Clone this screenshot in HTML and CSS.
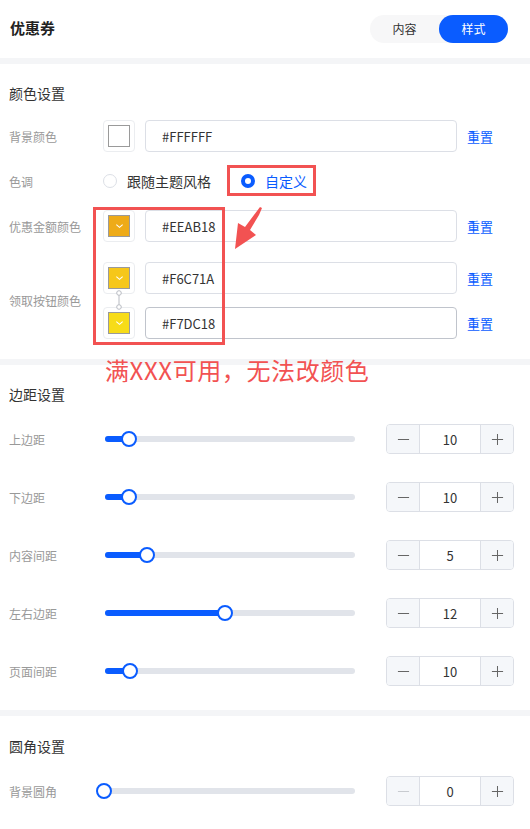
FILE: index.html
```html
<!DOCTYPE html>
<html lang="zh-CN">
<head>
<meta charset="utf-8">
<title>优惠券</title>
<link rel="stylesheet" href="styles.css">
</head>
<body>
<div class="page">
  <header class="top">
    <h1 class="title">优惠券</h1>
    <div class="tabs">
      <span class="tab">内容</span>
      <span class="tab active">样式</span>
    </div>
  </header>

  <section class="sec">
    <h2 class="sec-title">颜色设置</h2>
    <div class="row">
      <span class="label">背景颜色</span>
      <div class="swatch"><i class="chip chip-white"></i></div>
      <div class="input">#FFFFFF</div>
      <a class="reset">重置</a>
    </div>
    <div class="row">
      <span class="label">色调</span>
      <div class="radio"><span class="ring"></span>跟随主题风格</div>
      <div class="radio checked"><span class="ring"></span>自定义</div>
    </div>
    <div class="row">
      <span class="label">优惠金额颜色</span>
      <div class="swatch"><i class="chip chip-amount"><svg viewBox="0 0 10 6" class="chev"><polyline points="1.5,1.5 5,4.5 8.5,1.5"/></svg></i></div>
      <div class="input">#EEAB18</div>
      <a class="reset">重置</a>
    </div>
    <div class="row group">
      <span class="label">领取按钮颜色</span>
      <div class="pair">
        <div class="subrow">
          <div class="swatch"><i class="chip chip-btn1"><svg viewBox="0 0 10 6" class="chev"><polyline points="1.5,1.5 5,4.5 8.5,1.5"/></svg></i></div>
          <div class="input">#F6C71A</div>
          <a class="reset">重置</a>
        </div>
        <div class="subrow">
          <div class="swatch"><i class="chip chip-btn2"><svg viewBox="0 0 10 6" class="chev"><polyline points="1.5,1.5 5,4.5 8.5,1.5"/></svg></i></div>
          <div class="input input-hover">#F7DC18</div>
          <a class="reset">重置</a>
        </div>
        <svg class="link" viewBox="0 0 8 20"><circle cx="4" cy="3" r="2.3"/><line x1="4" y1="5.3" x2="4" y2="14.7"/><circle cx="4" cy="17" r="2.3"/></svg>
      </div>
    </div>
  </section>

  <section class="sec sec-space">
    <h2 class="sec-title">边距设置</h2>
    <div class="srow">
      <span class="label slabel">上边距</span>
      <div class="track"><div class="fill" style="width:24px"></div><span class="thumb" style="left:24px"></span></div>
      <div class="stepper"><span class="btn"><svg viewBox="0 0 14 14"><line x1="1" y1="7" x2="13" y2="7"/></svg></span><span class="val">10</span><span class="btn"><svg viewBox="0 0 14 14"><line x1="1" y1="7" x2="13" y2="7"/><line x1="7" y1="1" x2="7" y2="13"/></svg></span></div>
    </div>
    <div class="srow">
      <span class="label slabel">下边距</span>
      <div class="track"><div class="fill" style="width:24px"></div><span class="thumb" style="left:24px"></span></div>
      <div class="stepper"><span class="btn"><svg viewBox="0 0 14 14"><line x1="1" y1="7" x2="13" y2="7"/></svg></span><span class="val">10</span><span class="btn"><svg viewBox="0 0 14 14"><line x1="1" y1="7" x2="13" y2="7"/><line x1="7" y1="1" x2="7" y2="13"/></svg></span></div>
    </div>
    <div class="srow">
      <span class="label slabel">内容间距</span>
      <div class="track"><div class="fill" style="width:42px"></div><span class="thumb" style="left:42px"></span></div>
      <div class="stepper"><span class="btn"><svg viewBox="0 0 14 14"><line x1="1" y1="7" x2="13" y2="7"/></svg></span><span class="val">5</span><span class="btn"><svg viewBox="0 0 14 14"><line x1="1" y1="7" x2="13" y2="7"/><line x1="7" y1="1" x2="7" y2="13"/></svg></span></div>
    </div>
    <div class="srow">
      <span class="label slabel">左右边距</span>
      <div class="track"><div class="fill" style="width:120px"></div><span class="thumb" style="left:120px"></span></div>
      <div class="stepper"><span class="btn"><svg viewBox="0 0 14 14"><line x1="1" y1="7" x2="13" y2="7"/></svg></span><span class="val">12</span><span class="btn"><svg viewBox="0 0 14 14"><line x1="1" y1="7" x2="13" y2="7"/><line x1="7" y1="1" x2="7" y2="13"/></svg></span></div>
    </div>
    <div class="srow">
      <span class="label slabel">页面间距</span>
      <div class="track"><div class="fill" style="width:25px"></div><span class="thumb" style="left:25px"></span></div>
      <div class="stepper"><span class="btn"><svg viewBox="0 0 14 14"><line x1="1" y1="7" x2="13" y2="7"/></svg></span><span class="val">10</span><span class="btn"><svg viewBox="0 0 14 14"><line x1="1" y1="7" x2="13" y2="7"/><line x1="7" y1="1" x2="7" y2="13"/></svg></span></div>
    </div>
  </section>

  <section class="sec sec-radius">
    <h2 class="sec-title">圆角设置</h2>
    <div class="srow">
      <span class="label slabel">背景圆角</span>
      <div class="track"><div class="fill" style="width:0px"></div><span class="thumb" style="left:-1px"></span></div>
      <div class="stepper"><span class="btn disabled"><svg viewBox="0 0 14 14"><line x1="1" y1="7" x2="13" y2="7"/></svg></span><span class="val">0</span><span class="btn"><svg viewBox="0 0 14 14"><line x1="1" y1="7" x2="13" y2="7"/><line x1="7" y1="1" x2="7" y2="13"/></svg></span></div>
    </div>
  </section>

  <div class="mark mark-radio"></div>
  <div class="mark mark-swatches"></div>
  <svg class="arrow" viewBox="0 0 40 50"><polygon points="37,2 34,9 25,24 31,29 10,43 13,17 20,21 35,1"/></svg>
  <div class="note">满XXX可用，无法改颜色</div>
</div>
</body>
</html>
```

FILE: styles.css
```css
* { box-sizing: border-box; }
html, body { margin: 0; padding: 0; background: #fff; }
body {
  font-family: "Noto Sans CJK SC", "Noto Sans", sans-serif;
  color: #333;
}
.page { position: relative; width: 530px; }

.top {
  height: 58px;
  display: flex;
  align-items: center;
  justify-content: space-between;
  padding: 0 22px 4px 10px;
}
.title { margin: 0; font-size: 15px; font-weight: 700; color: #222; }
.tabs {
  display: flex;
  height: 28px;
  margin-top: 3px;
  background: #f7f7f8;
  border-radius: 14px;
}
.tab {
  width: 69px;
  display: flex;
  align-items: center;
  justify-content: center;
  font-size: 12px;
  color: #333;
  border-radius: 14px;
}
.tab.active { background: #0a5cff; color: #fff; }

.sec {
  border-top: 6px solid #f4f5f7;
  padding: 19px 0 20px 9px;
}
.sec-title {
  margin: 0 0 17px;
  font-size: 14px;
  line-height: 20px;
  font-weight: 400;
  color: #333;
}
.row {
  display: flex;
  align-items: center;
  min-height: 32px;
  margin-bottom: 13px;
}
.row:last-child { margin-bottom: 0; }
.row.group { margin-top: 20px; }
.label {
  flex: none;
  width: 94px;
  font-size: 12px;
  color: #999;
}
.swatch {
  flex: none;
  width: 32px;
  height: 32px;
  border: 1px solid #ebedf0;
  border-radius: 4px;
  display: flex;
  align-items: center;
  justify-content: center;
}
.chip {
  width: 22px;
  height: 22px;
  border: 1px solid #9a9a9a;
  display: flex;
  align-items: center;
  justify-content: center;
}
.chip-white { background: #fff; }
.chip-amount { background: #eeab18; }
.chip-btn1 { background: #f6c71a; }
.chip-btn2 { background: #f7dc18; }
.chev { width: 9px; height: 6px; fill: none; stroke: #fff; stroke-width: 1.2; }
.input {
  flex: none;
  width: 312px;
  height: 32px;
  margin-left: 10px;
  border: 1px solid #dcdfe6;
  border-radius: 4px;
  padding-left: 16px;
  display: flex;
  align-items: center;
  font-size: 13px;
  color: #333;
}
.input-hover { border-color: #c0c4cc; }
.reset {
  margin-left: 10px;
  font-size: 13px;
  color: #0a5cff;
  cursor: pointer;
}
.radio {
  display: flex;
  align-items: center;
  font-size: 14px;
  color: #333;
  margin-right: 30px;
}
.ring {
  width: 14px;
  height: 14px;
  border: 1px solid #dcdfe6;
  border-radius: 50%;
  margin-right: 10px;
  background: #fff;
}
.radio.checked { color: #0a5cff; }
.radio.checked .ring {
  border: 4.5px solid #0a5cff;
  background: #fff;
}
.pair {
  position: relative;
  display: flex;
  flex-direction: column;
  gap: 13px;
}
.subrow { display: flex; align-items: center; }
.link {
  position: absolute;
  left: 12px;
  top: 28px;
  width: 8px;
  height: 20px;
  fill: #fff;
  stroke: #b8bbc2;
  stroke-width: 1;
}

.sec-space { padding-bottom: 24px; }
.sec-space .sec-title, .sec-radius .sec-title { margin-bottom: 20px; }
.sec-radius { padding-top: 20px; }
.srow {
  display: flex;
  align-items: center;
  height: 30px;
  margin-bottom: 28px;
}
.srow:last-child { margin-bottom: 0; }
.slabel { width: 96px; }
.track {
  position: relative;
  width: 250px;
  height: 6px;
  border-radius: 3px;
  background: #e1e4ea;
}
.fill {
  height: 6px;
  border-radius: 3px;
  background: #0a5cff;
}
.thumb {
  position: absolute;
  top: 50%;
  width: 16px;
  height: 16px;
  margin: -8px 0 0 -8px;
  border: 2px solid #0a5cff;
  border-radius: 50%;
  background: #fff;
}
.stepper {
  margin-left: auto;
  margin-right: 16px;
  display: flex;
  width: 128px;
  height: 30px;
  border: 1px solid #dcdfe6;
  border-radius: 4px;
  overflow: hidden;
}
.btn {
  width: 32px;
  flex: none;
  background: #f5f7fa;
  display: flex;
  align-items: center;
  justify-content: center;
}
.btn svg { width: 13px; height: 13px; stroke: #666; stroke-width: 1.1; }
.btn.disabled svg { stroke: #c8cbd0; }
.val {
  flex: 1;
  border-left: 1px solid #dcdfe6;
  border-right: 1px solid #dcdfe6;
  display: flex;
  align-items: center;
  justify-content: center;
  font-size: 13px;
  color: #333;
}

.mark {
  position: absolute;
  border: 3px solid #f25252;
}
.mark-radio { left: 227px; top: 165px; width: 89px; height: 31px; }
.mark-swatches { left: 93px; top: 207px; width: 132px; height: 138px; }
.arrow {
  position: absolute;
  left: 225px;
  top: 206px;
  width: 40px;
  height: 50px;
  fill: #f25252;
}
.note {
  position: absolute;
  left: 105px;
  top: 355px;
  font-size: 24px;
  line-height: 30px;
  letter-spacing: 0.6px;
  color: #f25252;
  white-space: nowrap;
}
```
